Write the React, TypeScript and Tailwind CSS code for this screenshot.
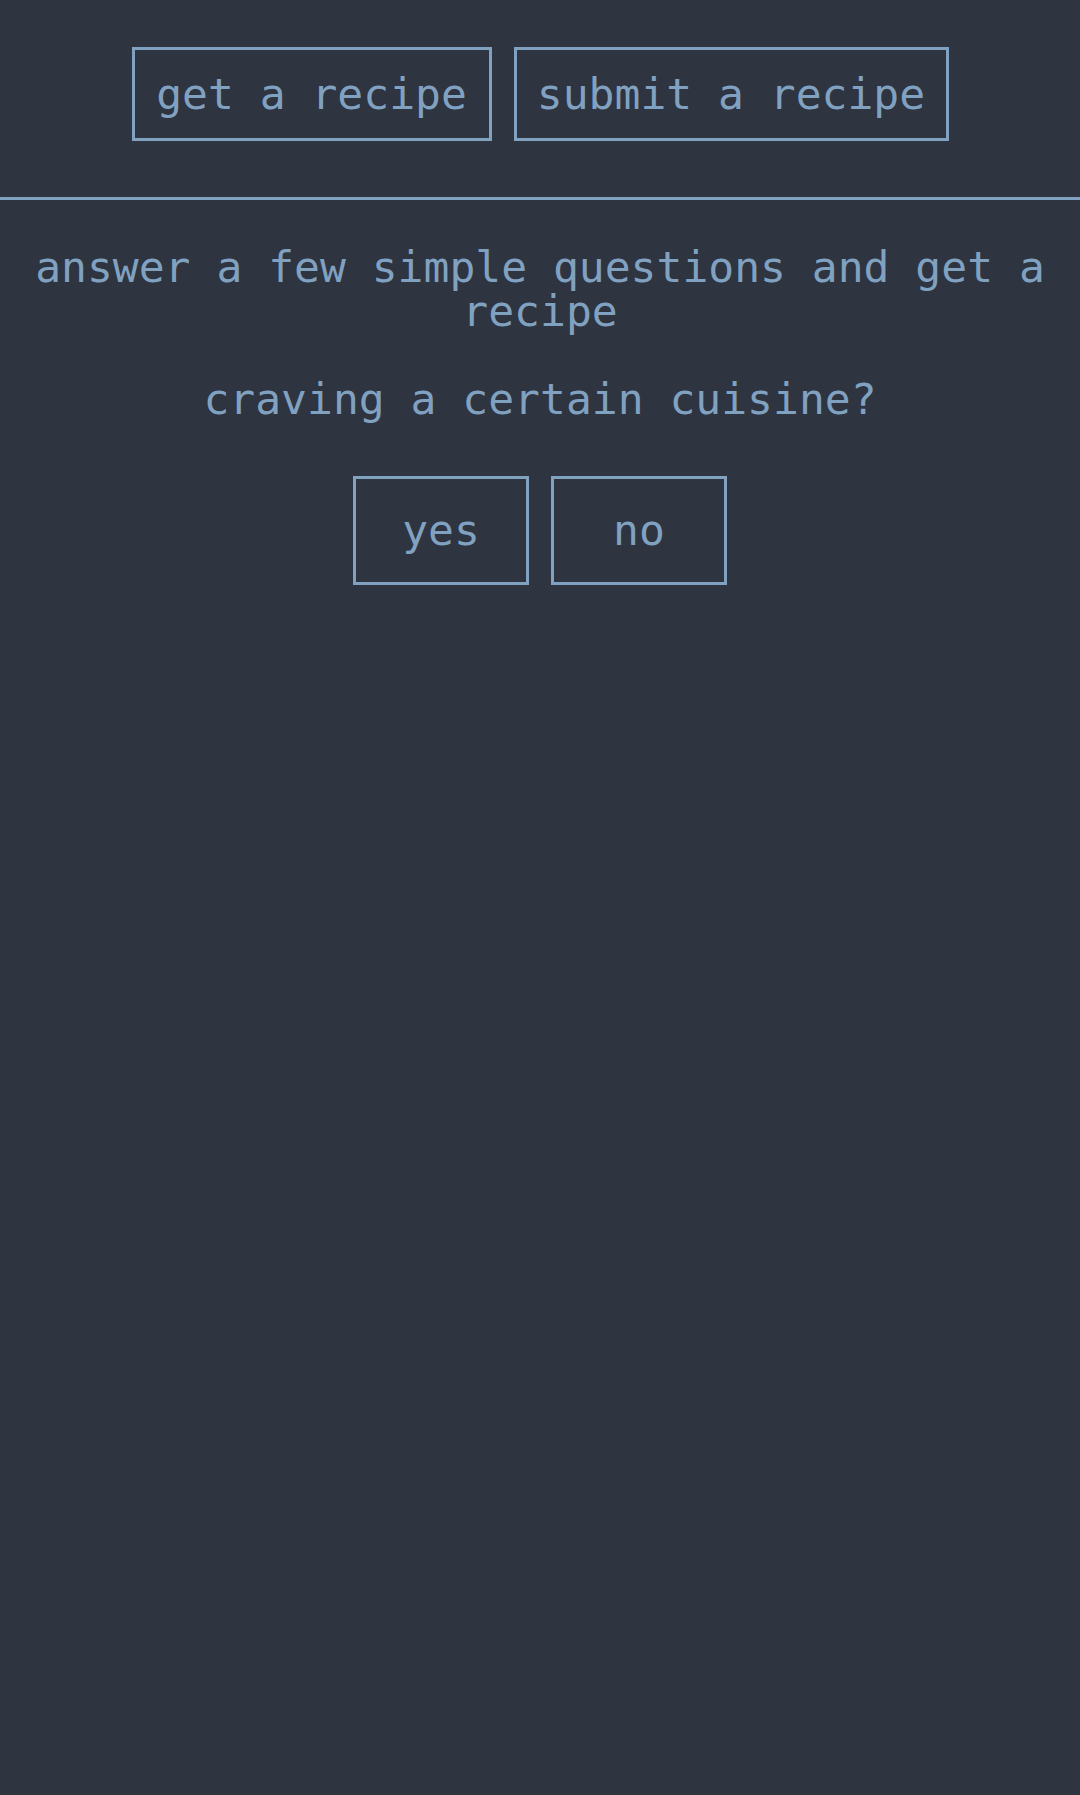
export default function App() {
  const mono = { fontFamily: '"DejaVu Sans Mono", "Liberation Mono", monospace' };

  return (
    <div
      className="min-h-[1795px] w-full bg-[#2e3440] text-[#81a1c1] text-[43px]"
      style={mono}
    >
      {/* navigation */}
      <nav className="flex justify-center gap-[22px] pt-[47px] pb-[56px]">
        <button className="h-[94px] w-[360px] border-[3px] border-[#81a1c1] flex items-center justify-center">
          get a recipe
        </button>
        <button className="h-[94px] w-[435px] border-[3px] border-[#81a1c1] flex items-center justify-center">
          submit a recipe
        </button>
      </nav>

      <hr className="border-0 h-[3px] bg-[#81a1c1]" />

      {/* question */}
      <main className="flex flex-col items-center text-center">
        <p className="mt-[46px] leading-[43.5px] px-[20px]">
          answer a few simple questions and get a recipe
        </p>
        <p className="mt-[45px] leading-[43.5px]">craving a certain cuisine?</p>
        <div className="flex gap-[22px] mt-[54px]">
          <button className="w-[176px] h-[109px] border-[3px] border-[#81a1c1] flex items-center justify-center">
            yes
          </button>
          <button className="w-[176px] h-[109px] border-[3px] border-[#81a1c1] flex items-center justify-center">
            no
          </button>
        </div>
      </main>
    </div>
  );
}
